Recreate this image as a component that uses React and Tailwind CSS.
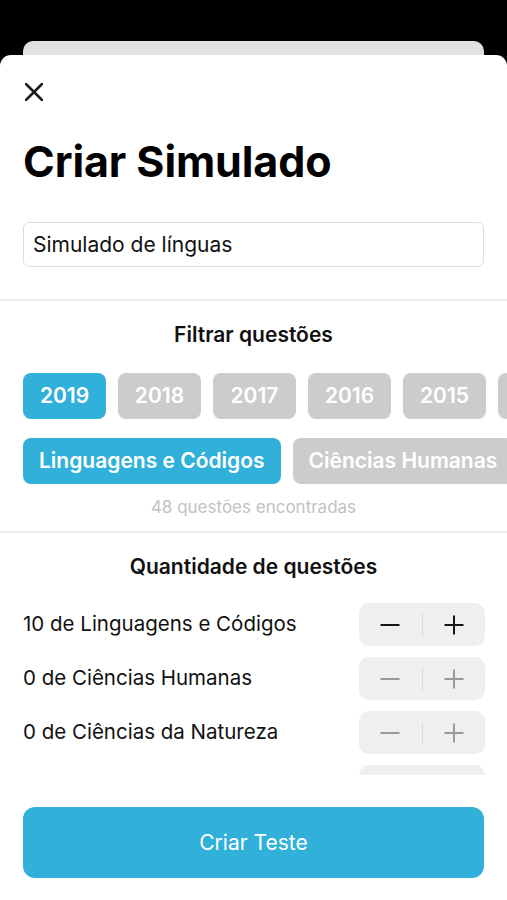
import React from "react";

const font = { fontFamily: "Inter, 'Noto Sans', sans-serif" };

function Minus({ color }) {
  return (
    <svg width="20" height="20" viewBox="0 0 20 20">
      <line x1="0.5" y1="10" x2="19.5" y2="10" stroke={color} strokeWidth="2" />
    </svg>
  );
}
function Plus({ color }) {
  return (
    <svg width="20" height="20" viewBox="0 0 20 20">
      <line x1="0.5" y1="10" x2="19.5" y2="10" stroke={color} strokeWidth="2" />
      <line x1="10" y1="0.5" x2="10" y2="19.5" stroke={color} strokeWidth="2" />
    </svg>
  );
}

function Stepper({ active }) {
  const c = active ? "#151515" : "#9a9a9a";
  return (
    <div className="w-[126px] h-[43px] bg-[#efefef] rounded-[10px] flex items-center shrink-0">
      <div className="flex-1 flex items-center justify-center">
        <Minus color={c} />
      </div>
      <div className="w-px h-[22px] bg-[#d9d9d9]" />
      <div className="flex-1 flex items-center justify-center">
        <Plus color={c} />
      </div>
    </div>
  );
}

export default function App() {
  const years = ["2019", "2018", "2017", "2016", "2015", "2014"];
  const cats = ["Linguagens e Códigos", "Ciências Humanas", "Ciências da Natureza"];
  const rows = [
    ["10 de Linguagens e Códigos", true],
    ["0 de Ciências Humanas", false],
    ["0 de Ciências da Natureza", false],
    ["0 de Matemática", false],
  ];
  return (
    <div className="w-[507px] h-[900px] bg-black overflow-hidden flex flex-col" style={font}>
      <div className="pt-[41px] px-[23px]">
        <div className="h-[14px] bg-[#e1e1e1] rounded-t-[10px]" />
      </div>
      <div className="flex-1 bg-white rounded-t-[11px] flex flex-col overflow-hidden">
        <div className="pt-[28px] pl-[25px]">
          <svg width="18" height="18" viewBox="0 0 18 18">
            <line x1="1" y1="1" x2="17" y2="17" stroke="#1c1c1c" strokeWidth="2.5" strokeLinecap="round" />
            <line x1="17" y1="1" x2="1" y2="17" stroke="#1c1c1c" strokeWidth="2.5" strokeLinecap="round" />
          </svg>
        </div>
        <h1 className="mt-[35px] px-[23px] text-[43px] leading-[50px] font-bold text-black tracking-[-0.1px]">
          Criar Simulado
        </h1>
        <div className="mt-[36px] mx-[23px] h-[45px] border border-[#dedede] rounded-[6px] flex items-center pl-[9px]">
          <span className="text-[21px] text-[#111]">Simulado de línguas</span>
        </div>
        <div className="mt-[32px] h-[2px] bg-[#ececec]" />
        <div className="mt-[21px] text-center text-[21px] leading-[26px] font-semibold text-[#111]">
          Filtrar questões
        </div>
        <div className="mt-[25px] pl-[23px] flex gap-[12px] overflow-hidden">
          {years.map((y, i) => (
            <div
              key={y}
              className={
                "h-[46px] w-[83px] rounded-[8px] flex items-center justify-center shrink-0 text-[21px] font-semibold text-white " +
                (i === 0 ? "bg-[#31b0da]" : "bg-[#cccccc]")
              }
            >
              {y}
            </div>
          ))}
        </div>
        <div className="mt-[19px] pl-[23px] flex gap-[12px] overflow-hidden">
          {cats.map((c, i) => (
            <div
              key={c}
              className={
                "h-[46px] px-[16px] rounded-[8px] flex items-center shrink-0 text-[21px] font-semibold text-white " +
                (i === 0 ? "bg-[#31b0da]" : "bg-[#cccccc]")
              }
            >
              {c}
            </div>
          ))}
        </div>
        <div className="mt-[12px] text-center text-[17px] leading-[22px] text-[#c2c2c2]">
          48 questões encontradas
        </div>
        <div className="mt-[13px] h-[2px] bg-[#ececec]" />
        <div className="mt-[21px] text-center text-[21px] leading-[26px] font-semibold text-[#111]">
          Quantidade de questões
        </div>
        <div className="mt-[23px] h-[172px] overflow-hidden px-[22px] flex flex-col gap-[11px]">
          {rows.map(([t, a]) => (
            <div key={t} className="flex items-center justify-between shrink-0 pl-px">
              <span className="text-[20.5px] text-[#111]">{t}</span>
              <Stepper active={a} />
            </div>
          ))}
        </div>
        <div className="mt-[32px] mx-[23px] h-[71px] bg-[#31b0da] rounded-[12px] flex items-center justify-center">
          <span className="text-[21px] text-white">Criar Teste</span>
        </div>
      </div>
    </div>
  );
}
